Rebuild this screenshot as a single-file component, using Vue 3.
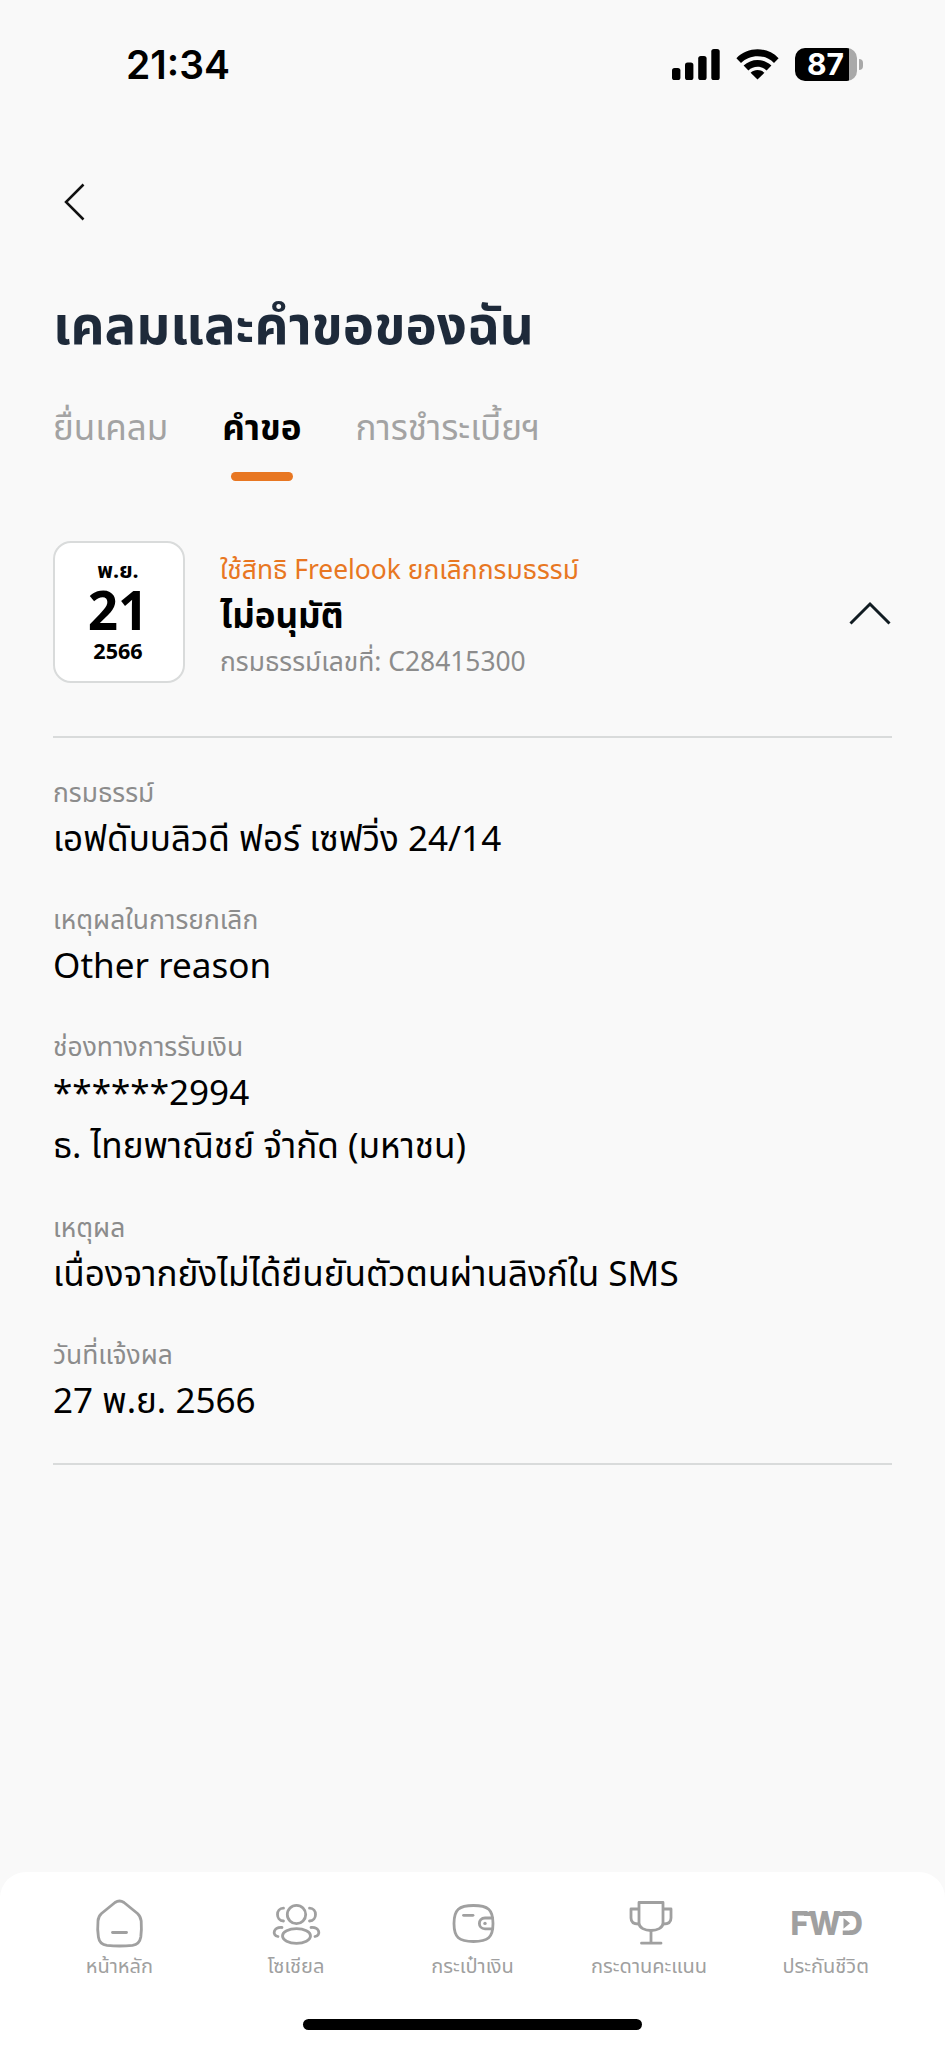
<template>
    <div class="screen">
        <header class="status-bar">
            <span class="time">21:34</span>
            <div class="status-icons">
                <svg class="signal" width="48" height="31" viewBox="0 0 48 31">
                    <rect x="0" y="19" width="8.4" height="12" rx="2.6" />
                    <rect x="13" y="13.5" width="8.4" height="17.5" rx="2.6" />
                    <rect x="26.2" y="7" width="8.4" height="24" rx="2.6" />
                    <rect x="39.3" y="0" width="8.4" height="31" rx="2.6" />
                </svg>
                <svg class="wifi" width="43" height="31" viewBox="0 0 43 31">
                    <path d="M0.4 9.2C12 -2.7 31 -2.7 42.6 9.2L38 13.9C29 4.9 14 4.9 5 13.9Z" />
                    <path d="M7.6 16.6C15.4 9 27.6 9 35.4 16.6L30.6 21.4C25.5 16.6 17.5 16.6 12.4 21.4Z" />
                    <path d="M14.6 23.8C18.5 20.2 24.5 20.2 28.4 23.8L21.5 30.6Z" />
                </svg>
                <div class="battery">
                    <span class="battery-body">87</span>
                    <span class="battery-nub"></span>
                </div>
            </div>
        </header>

        <div class="back-row">
            <svg width="24" height="40" viewBox="0 0 24 40">
                <path d="M21.5 2.5L4 20L21.5 37.5" fill="none" stroke="#111" stroke-width="2.5" />
            </svg>
        </div>

        <main class="content">
            <h1 class="page-title">เคลมและคำขอของฉัน</h1>

            <nav class="tabs">
                <div v-for="tab in tabs" :key="tab" :class="['tab', { active: tab === activeTab }]">
                    <span>{{ tab }}</span>
                    <i v-if="tab === activeTab" class="tab-line"></i>
                </div>
            </nav>

            <section class="request">
                <div class="date-card">
                    <span class="date-small">พ.ย.</span>
                    <span class="date-day">21</span>
                    <span class="date-small">2566</span>
                </div>
                <div class="request-info">
                    <p class="request-type">ใช้สิทธิ Freelook ยกเลิกกรมธรรม์</p>
                    <p class="request-status">ไม่อนุมัติ</p>
                    <p class="request-policy">กรมธรรม์เลขที่: C28415300</p>
                </div>
                <svg class="chevron" width="44" height="26" viewBox="0 0 44 26">
                    <path d="M2.5 23.5L22 4L41.5 23.5" fill="none" stroke="#111c22" stroke-width="3" />
                </svg>
            </section>

            <dl class="details">
                <div v-for="item in details" :key="item.label" class="detail-item">
                    <dt>{{ item.label }}</dt>
                    <dd v-for="line in item.lines" :key="line">{{ line }}</dd>
                </div>
            </dl>
        </main>

        <footer class="bottom-nav">
            <div class="nav-items">
                <div class="nav-item">
                    <svg width="72" height="56" viewBox="0 0 72 56">
                        <path d="M32 6.5Q36.5 3.5 41 6.5L54.5 17.5Q57.7 20.5 58.2 25Q58.8 34 57.8 41Q56.5 48.5 49.5 49.4Q36.5 50.6 24 49.4Q16.5 48.5 15.4 41Q14.2 34 15 25Q15.2 20.5 18.5 17.5Z" />
                        <path d="M29.5 36.5H43.5" />
                    </svg>
                    <span>หน้าหลัก</span>
                </div>
                <div class="nav-item">
                    <svg width="72" height="56" viewBox="0 0 72 56">
                        <circle cx="36.5" cy="18.5" r="9.2" />
                        <ellipse cx="36.5" cy="40" rx="14" ry="7.3" />
                        <path d="M23.5 12.2C15.5 12.5 15.5 24.5 23.5 25" />
                        <path d="M49.5 12.2C57.5 12.5 57.5 24.5 49.5 25" />
                        <path d="M22 31.5C13.5 31 11.5 39 18 40.5" />
                        <path d="M51 31.5C59.5 31 61.5 39 55 40.5" />
                    </svg>
                    <span>โซเชียล</span>
                </div>
                <div class="nav-item">
                    <svg width="72" height="56" viewBox="0 0 72 56">
                        <path d="M36.5 9.5C51 9.5 56 13.5 56 27.5C56 41.5 51 45.5 36.5 45.5C22 45.5 17 41.5 17 27.5C17 13.5 22 9.5 36.5 9.5Z" />
                        <path d="M26.5 19.3H36" />
                        <path d="M55.5 22H48C40.5 22 40.5 32.8 48 32.8H55.5" />
                        <circle class="solid" cx="48" cy="27.4" r="1.7" />
                    </svg>
                    <span>กระเป๋าเงิน</span>
                </div>
                <div class="nav-item">
                    <svg width="72" height="56" viewBox="0 0 72 56">
                        <path d="M26 6.5H50V27C50 37 26 37 26 27Z" />
                        <path d="M25.5 13H18V22Q18 28 25.5 28" />
                        <path d="M50.5 13H58V22Q58 28 50.5 28" />
                        <path d="M38 34.5V47M28.5 47.2H48" />
                    </svg>
                    <span>กระดานคะแนน</span>
                </div>
                <div class="nav-item">
                    <svg width="80" height="56" viewBox="-4 0 80 56">
                        <text class="fwd" x="0.5" y="39" textLength="72.5" lengthAdjust="spacingAndGlyphs">FWD</text>
                        <!-- bars that join the letters along the top, then the cut-out with the arrow -->
                        <path class="solid" d="M14 15.7H24V20H14ZM44 15.7H58V20H44Z" />
                        <rect class="mask" x="51.5" y="20" width="8" height="14.5" />
                        <rect class="mask" x="48" y="34" width="4.5" height="6" />
                        <path class="solid" d="M53.5 22L60 27.3L53.5 32.7Z" />
                    </svg>
                    <span>ประกันชีวิต</span>
                </div>
            </div>
            <div class="home-indicator"></div>
        </footer>
    </div>
</template>

<script setup>
import { ref } from 'vue'

const tabs = ['ยื่นเคลม', 'คำขอ', 'การชำระเบี้ยฯ']
const activeTab = ref('คำขอ')

const details = [
    { label: 'กรมธรรม์', lines: ['เอฟดับบลิวดี ฟอร์ เซฟวิ่ง 24/14'] },
    { label: 'เหตุผลในการยกเลิก', lines: ['Other reason'] },
    { label: 'ช่องทางการรับเงิน', lines: ['******2994', 'ธ. ไทยพาณิชย์ จำกัด (มหาชน)'] },
    { label: 'เหตุผล', lines: ['เนื่องจากยังไม่ได้ยืนยันตัวตนผ่านลิงก์ใน SMS'] },
    { label: 'วันที่แจ้งผล', lines: ['27 พ.ย. 2566'] }
]
</script>

<style>
body {
    margin: 0;
    background: #f9f9f9;
}
</style>

<style scoped>
.screen {
    display: flex;
    flex-direction: column;
    width: 945px;
    height: 2048px;
    background: #f9f9f9;
    color: #000;
    font-family: "Noto Sans", "Noto Sans Thai", "Noto Sans Thai UI", sans-serif;
    overflow: hidden;
}

.status-bar {
    display: flex;
    justify-content: space-between;
    align-items: center;
    box-sizing: border-box;
    height: 128px;
    padding: 0 82px 0 126px;
}

.time {
    font-family: Inter, sans-serif;
    font-size: 39px;
    font-weight: 600;
}

.status-icons {
    display: flex;
    align-items: center;
}

.wifi {
    margin: 0 16px;
}

.battery {
    display: flex;
    align-items: center;
    gap: 2px;
}

.battery-body {
    box-sizing: border-box;
    width: 62px;
    height: 33px;
    border-radius: 10px;
    background: linear-gradient(to right, #000 54px, #a9a9a9 54px);
    color: #fff;
    font-family: Inter, sans-serif;
    font-size: 30px;
    font-weight: 700;
    line-height: 33px;
    padding-left: 12px;
}

.battery-nub {
    width: 4px;
    height: 11px;
    border-radius: 0 4px 4px 0;
    background: #a9a9a9;
}

.back-row {
    display: flex;
    align-items: center;
    height: 148px;
    padding-left: 62px;
}

.content {
    padding: 0 53px;
    flex: 1;
}

.page-title {
    margin: 12px 0 41px;
    font-size: 52.8px;
    line-height: 72px;
    font-weight: 700;
    color: #1e2a3a;
}

.tabs {
    display: flex;
    gap: 54px;
    height: 80px;
}

.tab {
    display: flex;
    flex-direction: column;
    align-items: center;
    font-size: 35px;
    line-height: 52px;
    color: #a3a3a3;
    white-space: nowrap;
}

.tab.active {
    color: #000;
    font-weight: 700;
}

.tab-line {
    width: 62px;
    height: 9px;
    margin-top: 19px;
    border-radius: 5px;
    background: #e87722;
}

.request {
    display: flex;
    align-items: center;
    height: 142px;
    margin-top: 60px;
    padding-bottom: 53px;
    border-bottom: 2px solid #d9dbdb;
}

.date-card {
    display: flex;
    flex-direction: column;
    align-items: center;
    box-sizing: border-box;
    width: 132px;
    height: 142px;
    padding: 13px 2px 0 0;
    border: 2px solid #d9dbdb;
    border-radius: 18px;
    background: #fff;
    font-weight: 700;
}

.date-small {
    font-size: 21.6px;
    line-height: 27px;
}

.date-day {
    font-size: 53px;
    line-height: 54px;
}

.request-info {
    flex: 1;
    margin: 6px 0 0 35px;
}

.request-info p {
    margin: 0;
    font-size: 26.4px;
    line-height: 40px;
}

.request-info .request-type {
    color: #e87722;
}

.request-info .request-status {
    font-size: 35px;
    line-height: 52px;
    font-weight: 700;
}

.request-info .request-policy {
    color: #8c8c8c;
}

.chevron {
    margin-top: 2px;
}

.details {
    display: flex;
    flex-direction: column;
    gap: 36.2px;
    margin: 0;
    padding: 35px 0 37px;
    border-bottom: 2px solid #d9dbdb;
}

.detail-item dt {
    font-size: 26.4px;
    line-height: 38px;
    color: #8c8c8c;
}

.detail-item dd {
    margin: 0;
    font-size: 35.1px;
    line-height: 53px;
}

.bottom-nav {
    display: flex;
    flex-direction: column;
    justify-content: space-between;
    align-items: center;
    box-sizing: border-box;
    height: 176px;
    padding: 24px 30px 18px;
    border-radius: 26px 26px 0 0;
    background: #fff;
}

.nav-items {
    display: grid;
    grid-template-columns: repeat(5, 176.6px);
}

.nav-item {
    display: flex;
    flex-direction: column;
    align-items: center;
    font-size: 20px;
    line-height: 28px;
    color: #a0a0a0;
    white-space: nowrap;
}

.nav-item svg {
    fill: none;
    stroke: #a0a0a0;
    stroke-width: 2.8;
    stroke-linecap: round;
    stroke-linejoin: round;
}

.nav-item .solid {
    fill: #a0a0a0;
    stroke: none;
}

.nav-item .mask {
    fill: #fff;
    stroke: none;
}

.nav-item .fwd {
    fill: #a0a0a0;
    stroke: none;
    font-family: Inter, sans-serif;
    font-size: 32px;
    font-weight: 800;
}

.home-indicator {
    width: 339px;
    height: 11px;
    border-radius: 6px;
    background: #000;
}
</style>
